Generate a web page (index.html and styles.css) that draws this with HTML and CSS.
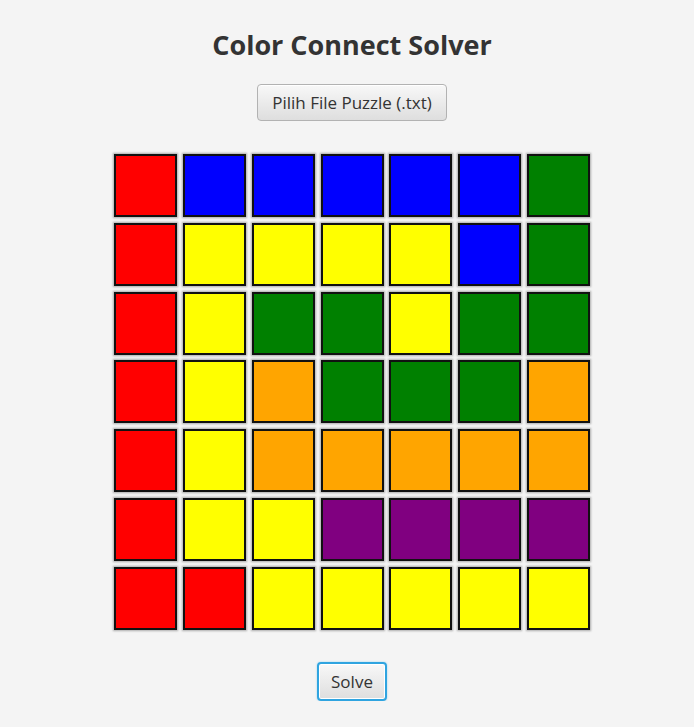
FILE: index.html
```html
<!DOCTYPE html>
<html lang="en">
<head>
    <meta charset="UTF-8">
    <meta name="viewport" content="width=device-width, initial-scale=1.0">
    <title>Color Connect Solver</title>
    <link rel="stylesheet" href="styles.css">
</head>
<body>
    <main class="app">
        <h1>Color Connect Solver</h1>
        <button class="btn">Pilih File Puzzle (.txt)</button>

        <div class="board">
            <div class="cell red"></div><div class="cell blue"></div><div class="cell blue"></div><div class="cell blue"></div><div class="cell blue"></div><div class="cell blue"></div><div class="cell green"></div>
            <div class="cell red"></div><div class="cell yellow"></div><div class="cell yellow"></div><div class="cell yellow"></div><div class="cell yellow"></div><div class="cell blue"></div><div class="cell green"></div>
            <div class="cell red"></div><div class="cell yellow"></div><div class="cell green"></div><div class="cell green"></div><div class="cell yellow"></div><div class="cell green"></div><div class="cell green"></div>
            <div class="cell red"></div><div class="cell yellow"></div><div class="cell orange"></div><div class="cell green"></div><div class="cell green"></div><div class="cell green"></div><div class="cell orange"></div>
            <div class="cell red"></div><div class="cell yellow"></div><div class="cell orange"></div><div class="cell orange"></div><div class="cell orange"></div><div class="cell orange"></div><div class="cell orange"></div>
            <div class="cell red"></div><div class="cell yellow"></div><div class="cell yellow"></div><div class="cell purple"></div><div class="cell purple"></div><div class="cell purple"></div><div class="cell purple"></div>
            <div class="cell red"></div><div class="cell red"></div><div class="cell yellow"></div><div class="cell yellow"></div><div class="cell yellow"></div><div class="cell yellow"></div><div class="cell yellow"></div>
        </div>

        <button class="btn btn-focused">Solve</button>
    </main>
</body>
</html>
```

FILE: styles.css
```css
body {
    margin: 0;
    background-color: #f4f4f4;
    font-family: "Open Sans", "DejaVu Sans", sans-serif;
    color: #333;
}

.app {
    display: flex;
    flex-direction: column;
    align-items: center;
    padding: 26px 0 0 10px;
}

h1 {
    margin: 0 0 20px 0;
    font-size: 27px;
    line-height: 38px;
    font-weight: 700;
    color: #333;
}

.btn {
    font-family: inherit;
    font-size: 17px;
    color: #333;
    height: 37px;
    padding: 0 14px;
    background: linear-gradient(to bottom, #f8f8f8, #dedede);
    border: 1px solid #b2b2b2;
    border-radius: 4px;
    box-shadow: inset 0 1px 0 #fff;
}

.btn-focused {
    height: 39px;
    margin-top: -1px;
    padding: 0 12px;
    border: 2px solid #2fa4e0;
    box-shadow: 0 0 2px #8fd0f0, inset 0 0 0 1px #fff;
}

.board {
    display: grid;
    grid-template-columns: repeat(7, 63px);
    grid-auto-rows: 63px;
    gap: 5.8px;
    margin: 33px 0 33px 0;
}

.cell {
    box-sizing: border-box;
    border: 2px solid #111;
    box-shadow: 0 0 2px 1px rgba(0, 0, 0, 0.3);
}

.red { background-color: #ff0000; }
.blue { background-color: #0000ff; }
.green { background-color: #008000; }
.yellow { background-color: #ffff00; }
.orange { background-color: #ffa500; }
.purple { background-color: #800080; }
```
